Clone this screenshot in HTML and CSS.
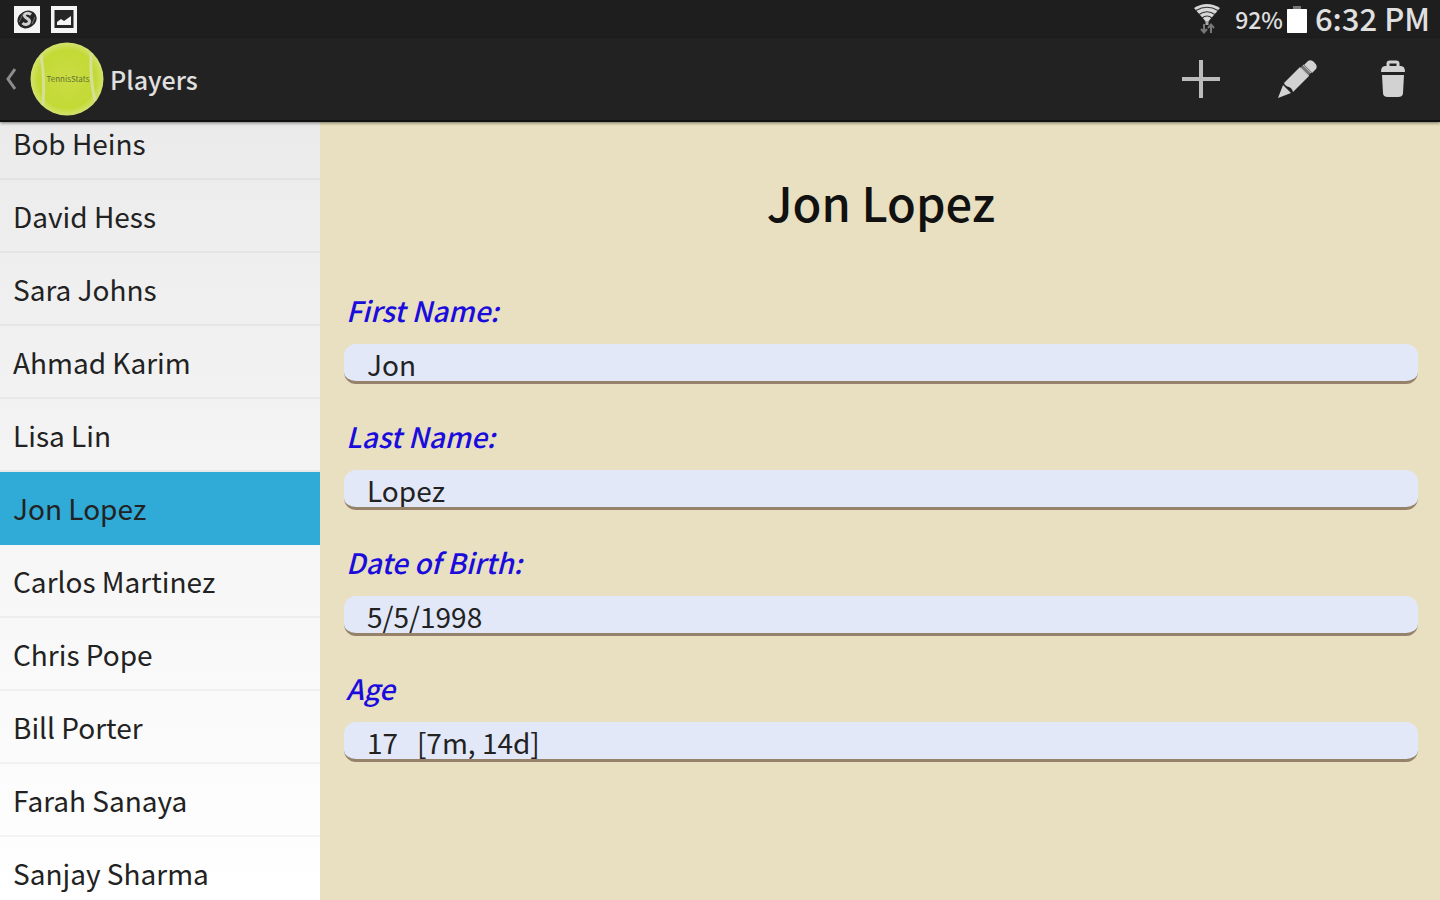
FILE: index.html
```html
<!DOCTYPE html>
<html lang="en">
<head>
    <meta charset="UTF-8">
    <meta name="viewport" content="width=device-width, initial-scale=1.0">
    <title>Players</title>
    <link rel="stylesheet" href="styles.css">
</head>
<body>
    <div class="status-bar">
        <div class="notifications">
            <svg width="26" height="27" viewBox="0 0 26 27">
                <rect width="26" height="27" fill="#f4f4f4"/>
                <ellipse cx="13" cy="13.500" rx="10" ry="8.500" fill="#252525" transform="rotate(-30 13 13.500)"/>
                <path d="M17 8.500c-3-2.500-7-1-6.500 1.500s5.500 2.500 5 5.500-4.500 4-7 1.500" fill="none" stroke="#d0d0d0" stroke-width="3"/>
                <path d="M5 16l4-8M18 18l3-7" stroke="#777" stroke-width="1"/>
            </svg>
            <svg width="26" height="27" viewBox="0 0 26 27">
                <rect width="26" height="27" fill="#f4f4f4"/>
                <rect x="3.500" y="4" width="19" height="18" fill="#252525"/>
                <path d="M6 19v-3l4-3 3 2 7-5v9z" fill="#f4f4f4"/>
            </svg>
        </div>
        <div class="indicators">
            <svg class="wifi" width="28" height="32" viewBox="0 0 28 32">
                <path d="M1 5Q14-3 27 5L14 20z" fill="#d8d8d8"/>
                <path d="M3 7.500Q14 1 25 7.500M6 11.500Q14 6 22 11.500M9 15Q14 11 19 15" fill="none" stroke="#333" stroke-width="1.200"/>
                <path d="M14 18v4" stroke="#aaa" stroke-width="3"/>
                <path d="M11 21v8M8 26l3 3.500 3-3.500M18 30v-8M15 25l3-3.500 3 3.500" fill="none" stroke="#777" stroke-width="2"/>
            </svg>
            <span class="battery-level">92%</span>
            <svg width="20" height="29" viewBox="0 0 20 29">
                <path d="M6 1h8v3h6v24H0V4h6z" fill="#777"/>
                <rect y="4" width="20" height="24" rx="1" fill="#fff"/>
            </svg>
            <span class="clock">6:32 PM</span>
        </div>
    </div>

    <header>
        <a class="home" href="#">
            <svg class="back" width="12" height="24" viewBox="0 0 12 24">
                <path d="M11 2L4 12l7 10" fill="none" stroke="#8c8c8c" stroke-width="3"/>
            </svg>
            <svg class="ball" width="74" height="74" viewBox="0 0 74 74">
                <defs>
                    <radialGradient id="felt">
                        <stop offset="0" stop-color="#cbdc45"/>
                        <stop offset="0.800" stop-color="#c3da35"/>
                        <stop offset="1" stop-color="#d4e270"/>
                    </radialGradient>
                </defs>
                <circle cx="37" cy="37" r="36.500" fill="url(#felt)"/>
                <path d="M11 13Q15 37 13 63M61 11Q60 37 65 59" fill="none" stroke="#d6df98" stroke-width="3"/>
                <text x="38" y="40" text-anchor="middle" class="ball-text">TennisStats</text>
            </svg>
            <h1>Players</h1>
        </a>
        <div class="actions">
            <button type="button" aria-label="Add player">
                <svg width="40" height="40" viewBox="0 0 40 40">
                    <path d="M20 1v38M1 20h38" stroke="#bcbcbc" stroke-width="4"/>
                </svg>
            </button>
            <button type="button" aria-label="Edit player">
                <svg width="40" height="40" viewBox="0 0 40 40">
                    <g fill="#d2d2d2">
                        <path d="M1 39l5-13 8 8z"/>
                        <path d="M7 24L23 8l9 9-16 16q-1-4-4-5-4-1-5-4z"/>
                        <path d="M31 2q3-2 6 1 4 4 2 7l-4 4-8-8z"/>
                    </g>
                    <path d="M25 7l8 8" stroke="#777" stroke-width="5"/>
                    <path d="M26 6l8 8M24 9l8 8" stroke="#bbb" stroke-width="1"/>
                </svg>
            </button>
            <button type="button" aria-label="Delete player">
                <svg width="40" height="40" viewBox="0 0 40 40">
                    <path d="M15 8V4.500q0-1.500 2-1.500h6q2 0 2 1.500V8" fill="none" stroke="#d2d2d2" stroke-width="3"/>
                    <path d="M8 13q0-6 4-6h16q4 0 4 6z" fill="#d2d2d2"/>
                    <path d="M9 16h22l-1 18q0 4-5 4H15q-5 0-5-4z" fill="#d2d2d2"/>
                </svg>
            </button>
        </div>
    </header>

    <main>
        <nav>
            <ul class="player-list">
                <li><a href="#">Bob Heins</a></li>
                <li><a href="#">David Hess</a></li>
                <li><a href="#">Sara Johns</a></li>
                <li><a href="#">Ahmad Karim</a></li>
                <li><a href="#">Lisa Lin</a></li>
                <li><a href="#" class="selected">Jon Lopez</a></li>
                <li><a href="#">Carlos Martinez</a></li>
                <li><a href="#">Chris Pope</a></li>
                <li><a href="#">Bill Porter</a></li>
                <li><a href="#">Farah Sanaya</a></li>
                <li><a href="#">Sanjay Sharma</a></li>
            </ul>
        </nav>

        <section class="player">
            <h2>Jon Lopez</h2>
            <form>
                <div class="field">
                    <label for="firstName">First Name:</label>
                    <input type="text" id="firstName" value="Jon">
                </div>
                <div class="field">
                    <label for="lastName">Last Name:</label>
                    <input type="text" id="lastName" value="Lopez">
                </div>
                <div class="field">
                    <label for="birthDate">Date of Birth:</label>
                    <input type="text" id="birthDate" value="5/5/1998">
                </div>
                <div class="field">
                    <label for="age">Age</label>
                    <input type="text" id="age" value="17   [7m, 14d]" readonly>
                </div>
            </form>
        </section>
    </main>
</body>
</html>
```

FILE: styles.css
```css
:root {
    --bar-color: #222222;
    --panel-color: #e8e0c0;
    --selected-color: #30aad6;
    --field-color: #e2e8f8;
    --label-color: #1a0cdc;
}

* {
    margin: 0;
    padding: 0;
    box-sizing: border-box;
}

body {
    height: 100vh;
    display: flex;
    flex-direction: column;
    overflow: hidden;
    font-family: "Noto Sans CJK SC", "Noto Sans", sans-serif;
    font-size: 28px;
    color: #222;
}

svg {
    display: block;
    flex-shrink: 0;
}

.status-bar {
    display: flex;
    justify-content: space-between;
    align-items: center;
    height: 38px;
    flex-shrink: 0;
    padding: 0 10px 0 14px;
    background-color: #1e1e1e;
    color: #e0e0e0;
}

.notifications {
    display: flex;
    gap: 11px;
}

.indicators {
    display: flex;
    align-items: center;
    font-weight: 500;
    line-height: 36px;
}

.wifi {
    margin-right: 14px;
}

.battery-level {
    margin-right: 4px;
    font-size: 23px;
}

.clock {
    margin-left: 8px;
    padding-bottom: 2px;
    font-size: 31px;
}

header {
    position: relative;
    display: flex;
    justify-content: space-between;
    align-items: center;
    height: 84px;
    flex-shrink: 0;
    padding: 0 27px 0 4px;
    background-color: var(--bar-color);
    border-bottom: 2px solid #111;
    box-shadow: 0 1px 3px rgba(0,0,0,0.5);
    z-index: 1;
}

.home {
    display: flex;
    align-items: center;
    color: #e0e0e0;
    text-decoration: none;
}

.ball {
    margin: 0 6px 0 14px;
}

.ball-text {
    font-size: 8px;
    fill: #65732f;
}

h1 {
    font-size: 25px;
    font-weight: 500;
}

.actions {
    display: flex;
    gap: 56px;
}

button {
    background: none;
    border: none;
    cursor: pointer;
}

main {
    flex: 1;
    display: flex;
    min-height: 0;
}

nav {
    width: 320px;
    flex-shrink: 0;
    overflow: hidden;
    background: linear-gradient(#ebebeb, #ffffff);
}

/* the list is scrolled a little way under the header */
.player-list {
    margin-top: -15px;
    list-style: none;
}

.player-list a {
    display: block;
    height: 73px;
    padding-left: 13px;
    line-height: 73px;
    color: inherit;
    text-decoration: none;
    border-bottom: 2px solid rgba(0,0,0,0.04);
}

.player-list .selected {
    background-color: var(--selected-color);
    border-bottom-color: transparent;
}

.player {
    flex: 1;
    padding: 50px 22px 0 24px;
    background-color: var(--panel-color);
}

h2 {
    margin-bottom: 58px;
    font-size: 47px;
    font-weight: 500;
    line-height: 60px;
    text-align: center;
    color: #111;
}

.field {
    display: flex;
    flex-direction: column;
    gap: 14px;
    margin-bottom: 32px;
}

label {
    padding-left: 2px;
    font-weight: 500;
    font-style: italic;
    line-height: 40px;
    color: var(--label-color);
}

input {
    width: 100%;
    height: 40px;
    padding: 2px 23px 0;
    font: inherit;
    color: inherit;
    background-color: var(--field-color);
    border: none;
    border-bottom: 3px solid #96826a;
    border-radius: 12px;
}
```
